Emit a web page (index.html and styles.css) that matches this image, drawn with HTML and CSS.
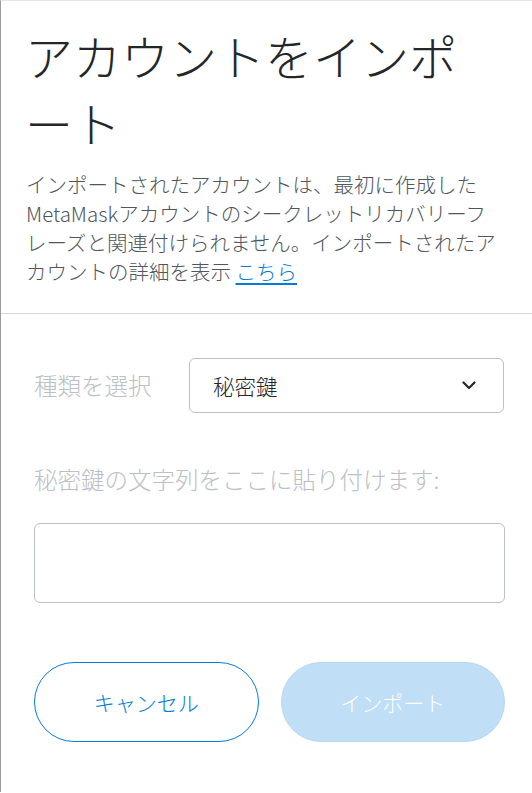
FILE: index.html
```html
<!DOCTYPE html>
<html lang="ja">
<head>
<meta charset="utf-8">
<title>アカウントをインポート</title>
<link rel="stylesheet" href="styles.css">
</head>
<body>
<div class="page">
  <header class="header">
    <h1 class="title">アカウントをインポート</h1>
    <p class="desc">インポートされたアカウントは、最初に作成したMetaMaskアカウントのシークレットリカバリーフレーズと関連付けられません。インポートされたアカウントの詳細を表示 <a class="link" href="#">こちら</a></p>
  </header>
  <main class="form">
    <div class="select-row">
      <span class="field-label">種類を選択</span>
      <div class="select">
        <span class="select-value">秘密鍵</span>
        <svg class="chevron" width="14" height="9" viewBox="0 0 14 9" aria-hidden="true"><path d="M1.5 1.5 L7 7 L12.5 1.5" fill="none" stroke="#24272a" stroke-width="2.2" stroke-linecap="round" stroke-linejoin="round"/></svg>
      </div>
    </div>
    <label class="field-label paste-label">秘密鍵の文字列をここに貼り付けます:</label>
    <div class="textarea"></div>
    <div class="buttons">
      <button class="btn btn-cancel">キャンセル</button>
      <button class="btn btn-import">インポート</button>
    </div>
  </main>
</div>
</body>
</html>
```
FILE: styles.css
```css
html, body {
  margin: 0;
  padding: 0;
  background: #ffffff;
}
body {
  font-family: "Noto Sans CJK JP", "Noto Sans", sans-serif;
  color: #24272a;
}
.page {
  min-height: 792px;
  border-top: 1px solid #e6e6e6;
  border-left: 1px solid #9a9a9a;
  box-sizing: border-box;
}
.header {
  padding: 21px 30px 27px 24px;
  border-bottom: 1px solid #d6d9dc;
}
.title {
  margin: 0;
  font-size: 48px;
  line-height: 67px;
  font-weight: 300;
  color: #24272a;
}
.desc {
  margin: 14px 0 0 1px;
  font-size: 20.5px;
  line-height: 29px;
  font-weight: 300;
  color: #4f565d;
}
.link {
  color: #037dd6;
  text-decoration: underline;
  text-underline-offset: 3px;
}
.form {
  padding: 44px 27px 0 33px;
  display: flex;
  flex-direction: column;
}
.select-row {
  display: flex;
  align-items: center;
}
.field-label {
  font-size: 23.5px;
  line-height: 33px;
  font-weight: 300;
  color: #bbc0c5;
}
.select-row .field-label {
  width: 155px;
  flex: none;
}
.select {
  flex: 1;
  height: 55px;
  box-sizing: border-box;
  border: 1px solid #bbc0c5;
  border-radius: 6px;
  display: flex;
  align-items: center;
  justify-content: space-between;
  padding: 0 27px 0 23px;
  margin-right: 1px;
}
.select-value {
  font-size: 21.5px;
  font-weight: 300;
  color: #24272a;
}
.chevron {
  display: block;
}
.paste-label {
  margin-top: 50px;
}
.textarea {
  margin-top: 27px;
  height: 80px;
  box-sizing: border-box;
  border: 1px solid #bbc0c5;
  border-radius: 6px;
}
.buttons {
  margin-top: 59px;
  display: flex;
  gap: 22px;
}
.btn {
  flex: 1;
  height: 80px;
  box-sizing: border-box;
  border-radius: 40px;
  font-family: inherit;
  font-size: 21px;
  font-weight: 300;
  padding: 0;
}
.btn-cancel {
  background: #ffffff;
  border: 1px solid #037dd6;
  color: #037dd6;
}
.btn-import {
  background: #c0def5;
  border: 1px solid #b5d8f2;
  color: #ffffff;
}
```
